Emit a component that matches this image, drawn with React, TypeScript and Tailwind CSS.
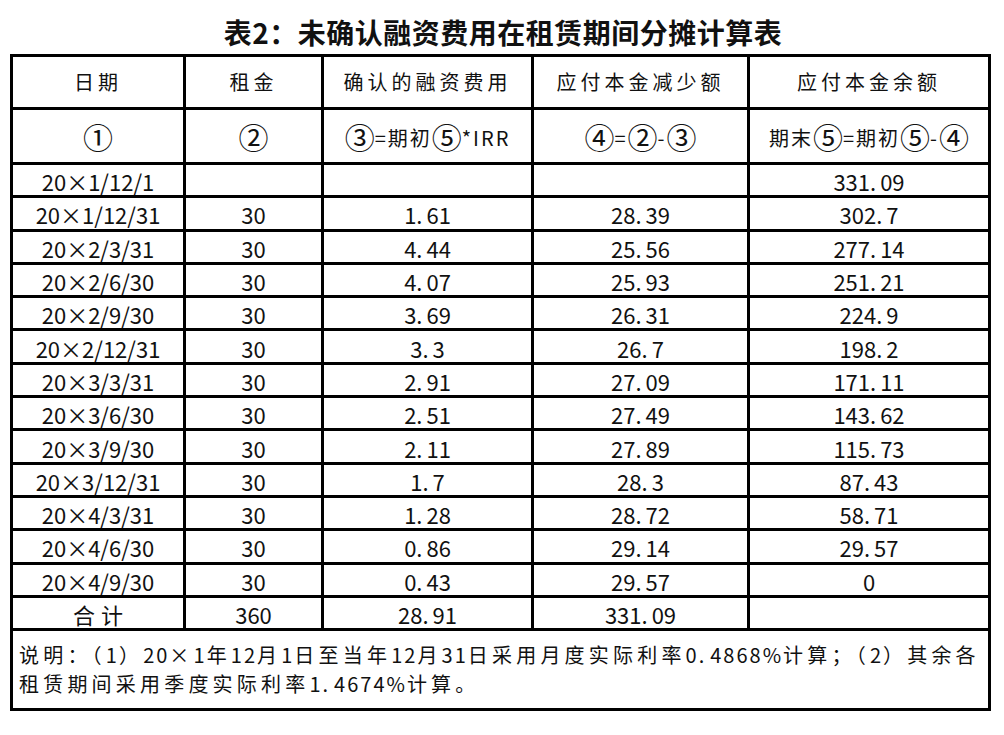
import React from "react";

const rows: string[][] = [
  ["20×1/12/1", "", "", "", "331.09"],
  ["20×1/12/31", "30", "1.61", "28.39", "302.7"],
  ["20×2/3/31", "30", "4.44", "25.56", "277.14"],
  ["20×2/6/30", "30", "4.07", "25.93", "251.21"],
  ["20×2/9/30", "30", "3.69", "26.31", "224.9"],
  ["20×2/12/31", "30", "3.3", "26.7", "198.2"],
  ["20×3/3/31", "30", "2.91", "27.09", "171.11"],
  ["20×3/6/30", "30", "2.51", "27.49", "143.62"],
  ["20×3/9/30", "30", "2.11", "27.89", "115.73"],
  ["20×3/12/31", "30", "1.7", "28.3", "87.43"],
  ["20×4/3/31", "30", "1.28", "28.72", "58.71"],
  ["20×4/6/30", "30", "0.86", "29.14", "29.57"],
  ["20×4/9/30", "30", "0.43", "29.57", "0"],
];

function Num({ v }: { v: string }) {
  const i = v.indexOf(".");
  if (i < 0) return <>{v}</>;
  return (
    <>
      {v.slice(0, i + 1)}
      <span className="ml-[4px]">{v.slice(i + 1)}</span>
    </>
  );
}

function C({ c }: { c: string }) {
  return <span className="text-[30px] leading-none align-[-3px] tracking-[0px]">{c}</span>;
}

function Note({ t }: { t: string }) {
  const parts = t.split(/([0-9.%]+)/);
  return (
    <div className="h-[29px] leading-[29px]">
      {parts.map((p, i) =>
        /^[0-9.%]+$/.test(p) ? (
          <span key={i} className="tracking-[2px]">
            <Num v={p} />
          </span>
        ) : (
          <React.Fragment key={i}>{p}</React.Fragment>
        )
      )}
    </div>
  );
}

const font = { fontFamily: '"Noto Sans CJK SC", "Noto Sans", sans-serif' };

export default function App() {
  const cell = "border-[3px] border-black text-center align-middle p-0";
  return (
    <div className="w-[1004px] h-[735px] bg-white text-[#111]" style={font}>
      <div className="h-[54px] pt-[14px] text-center text-[28px] leading-[37px] font-bold tracking-[0.5px] pl-[2px]">
        表2：未确认融资费用在租赁期间分摊计算表
      </div>
      <table className="ml-[10px] w-[981px] table-fixed border-collapse">
        <colgroup>
          <col className="w-[173px]" />
          <col className="w-[138px]" />
          <col className="w-[210px]" />
          <col className="w-[216px]" />
          <col className="w-[241px]" />
        </colgroup>
        <tbody>
          <tr className="h-[53px] text-[20px] tracking-[4px]">
            <td className={cell}>日期</td>
            <td className={cell}>租金</td>
            <td className={cell}>确认的融资费用</td>
            <td className={cell}>应付本金减少额</td>
            <td className={cell}>应付本金余额</td>
          </tr>
          <tr className="h-[55px] text-[20px] leading-[28px] tracking-[2px]">
            <td className={cell}>
              <C c="①" />
            </td>
            <td className={cell}>
              <C c="②" />
            </td>
            <td className={cell}>
              <C c="③" />=期初<C c="⑤" />*IRR
            </td>
            <td className={cell}>
              <C c="④" />=<C c="②" />-<C c="③" />
            </td>
            <td className={cell}>
              期末<C c="⑤" />=期初<C c="⑤" />-<C c="④" />
            </td>
          </tr>
          {rows.map((r, idx) => (
            <tr key={idx} className="h-[33.3px] text-[22px] leading-[28px]">
              {r.map((c, j) => (
                <td key={j} className={cell + " pt-[2px]"}>
                  <Num v={c} />
                </td>
              ))}
            </tr>
          ))}
          <tr className="h-[33.3px] text-[22px] leading-[28px]">
            <td className={cell + " pt-[2px] tracking-[6px] pl-[6px]"}>合计</td>
            <td className={cell + " pt-[2px]"}>360</td>
            <td className={cell + " pt-[2px]"}>
              <Num v="28.91" />
            </td>
            <td className={cell + " pt-[2px]"}>
              <Num v="331.09" />
            </td>
            <td className={cell}></td>
          </tr>
          <tr className="h-[80px]">
            <td
              colSpan={5}
              className="border-[3px] border-black align-middle text-left pl-[6px] pb-[2px] text-[20px] tracking-[4.2px] whitespace-nowrap"
            >
              <Note t="说明：（1）20×1年12月1日至当年12月31日采用月度实际利率0.4868%计算；（2）其余各" />
              <Note t="租赁期间采用季度实际利率1.4674%计算。" />
            </td>
          </tr>
        </tbody>
      </table>
    </div>
  );
}
